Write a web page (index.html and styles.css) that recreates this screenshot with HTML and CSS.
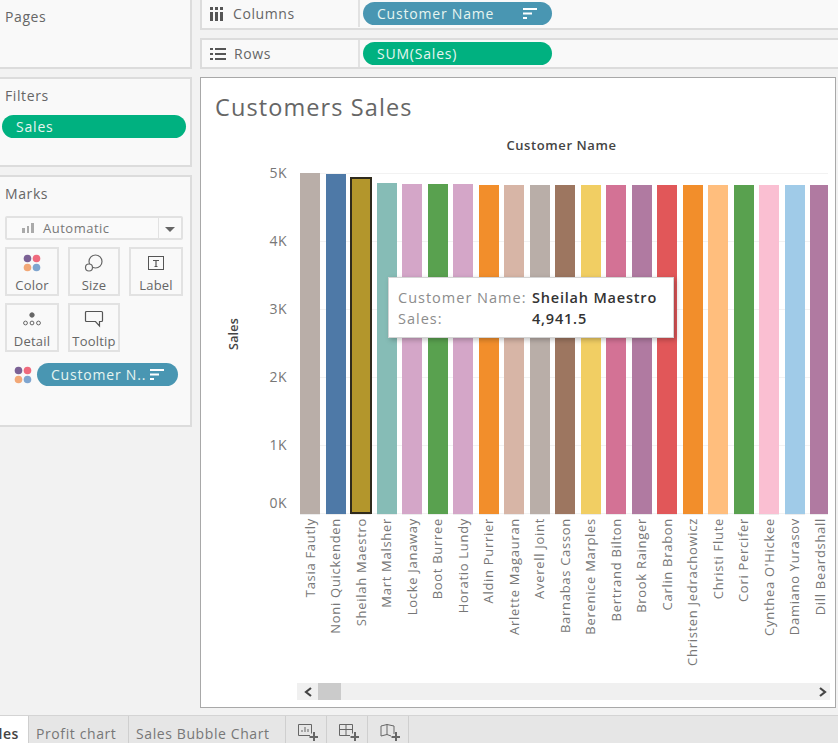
FILE: index.html
```html
<!DOCTYPE html>
<html lang="en">
<head>
    <meta charset="UTF-8">
    <title>Customers Sales</title>
    <link rel="stylesheet" href="styles.css">
</head>
<body>
<div id="wrap">
    <aside class="side">
        <section class="card pages"><h3>Pages</h3></section>
        <section class="card filters">
            <h3>Filters</h3>
            <div class="pill green filter-pill">Sales</div>
        </section>
        <section class="card marks">
            <h3>Marks</h3>
            <div class="select">
                <svg class="select-icon" width="14" height="12" viewBox="0 0 14 12"><path d="M1 6h3v5H1zM6 4h2v7H6zM10 1h3v10h-3z" fill="#aaa"/></svg>
                <span class="select-text">Automatic</span>
                <span class="select-arrow"></span>
            </div>
            <div class="mark-grid">
                <div class="mark-btn">
                    <svg width="18" height="18" viewBox="0 0 18 18"><circle cx="4.5" cy="4.5" r="3.8" fill="#7b6195"/><circle cx="13.5" cy="4.5" r="3.8" fill="#ef6a7d"/><circle cx="4.5" cy="13.5" r="3.8" fill="#f2a877"/><circle cx="13.5" cy="13.5" r="3.8" fill="#7fa5cf"/></svg>
                    <span>Color</span>
                </div>
                <div class="mark-btn">
                    <svg width="20" height="18" viewBox="0 0 20 18" fill="none" stroke="#666" stroke-width="1.2"><circle cx="11.5" cy="7.5" r="6.5"/><circle cx="5" cy="13.5" r="3.5" fill="#f9f9f9"/></svg>
                    <span>Size</span>
                </div>
                <div class="mark-btn">
                    <svg width="18" height="18" viewBox="0 0 18 18" fill="none" stroke="#555"><rect x="1.5" y="2.5" width="15" height="13"/><path d="M6 6.5h6M9 6.5v6M7.5 12.5h3" stroke-width="1.2"/></svg>
                    <span>Label</span>
                </div>
                <div class="mark-btn">
                    <svg width="20" height="18" viewBox="0 0 20 18" fill="none" stroke="#666"><circle cx="10" cy="5" r="2.2" fill="#666"/><circle cx="3.5" cy="13" r="1.9"/><circle cx="10" cy="13" r="1.9"/><circle cx="16.5" cy="13" r="1.9"/></svg>
                    <span>Detail</span>
                </div>
                <div class="mark-btn">
                    <svg width="20" height="18" viewBox="0 0 20 18" fill="none" stroke="#555" stroke-width="1.2"><path d="M2.5 1.5h15a1 1 0 0 1 1 1v8a1 1 0 0 1-1 1h-2v4.5l-4-4.5h-9a1 1 0 0 1-1-1v-8a1 1 0 0 1 1-1z"/></svg>
                    <span>Tooltip</span>
                </div>
            </div>
            <div class="mark-field">
                <svg width="18" height="18" viewBox="0 0 18 18"><circle cx="4.5" cy="4.5" r="3.8" fill="#7b6195"/><circle cx="13.5" cy="4.5" r="3.8" fill="#ef6a7d"/><circle cx="4.5" cy="13.5" r="3.8" fill="#f2a877"/><circle cx="13.5" cy="13.5" r="3.8" fill="#7fa5cf"/></svg>
                <div class="pill blue field-pill">
                    <span>Customer N..</span>
                    <svg class="sort" width="14" height="11" viewBox="0 0 14 11"><path d="M0 0h14v2H0zM0 4.500h9v2H0zM0 9h4v2H0z" fill="#fff"/></svg>
                </div>
            </div>
        </section>
    </aside>

    <main class="main">
        <div class="shelf shelf-columns">
            <div class="shelf-label">
                <svg width="13" height="14" viewBox="0 0 13 14"><path d="M0 0h3v3H0zM0 5h3v9H0zM5 0h3v3H5zM5 5h3v9H5zM10 0h3v3h-3zM10 5h3v9h-3z" fill="#555"/></svg>
                <span>Columns</span>
            </div>
            <div class="shelf-body">
                <div class="pill blue shelf-pill">
                    <span>Customer Name</span>
                    <svg class="sort" width="14" height="11" viewBox="0 0 14 11"><path d="M0 0h14v2H0zM0 4.500h9v2H0zM0 9h4v2H0z" fill="#fff"/></svg>
                </div>
            </div>
        </div>
        <div class="shelf shelf-rows">
            <div class="shelf-label shelf-label-rows">
                <svg width="16" height="12" viewBox="0 0 16 12"><path d="M0 0h3v2H0zM5 0h11v2H5zM0 5h3v2H0zM5 5h11v2H5zM0 10h3v2H0zM5 10h11v2H5z" fill="#555"/></svg>
                <span>Rows</span>
            </div>
            <div class="shelf-body">
                <div class="pill green shelf-pill"><span>SUM(Sales)</span></div>
            </div>
        </div>

        <section class="view">
            <h1 class="title">Customers Sales</h1>
            <div class="axis-title">Customer Name</div>
            <div class="chart">
                <div class="y-title"><span>Sales</span></div>
                <div class="y-axis">
                    <div class="tick">5K</div>
                    <div class="tick">4K</div>
                    <div class="tick">3K</div>
                    <div class="tick">2K</div>
                    <div class="tick">1K</div>
                    <div class="tick tick-zero">0K</div>
                </div>
                <div class="plot">
                    <div class="col"><div class="slot"><div class="bar" style="height:341px;background:#b9aea8"></div></div><div class="name">Tasia Fautly</div></div>
                    <div class="col"><div class="slot"><div class="bar" style="height:340px;background:#4e79a7"></div></div><div class="name">Noni Quickenden</div></div>
                    <div class="col"><div class="slot"><div class="bar bar-on" style="height:337px;background:#b3962c"></div></div><div class="name">Sheilah Maestro</div></div>
                    <div class="col"><div class="slot"><div class="bar" style="height:331px;background:#86bcb6"></div></div><div class="name">Mart Malsher</div></div>
                    <div class="col"><div class="slot"><div class="bar" style="height:330px;background:#d4a6c8"></div></div><div class="name">Locke Janaway</div></div>
                    <div class="col"><div class="slot"><div class="bar" style="height:330px;background:#59a14f"></div></div><div class="name">Boot Burree</div></div>
                    <div class="col"><div class="slot"><div class="bar" style="height:330px;background:#d4a6c8"></div></div><div class="name">Horatio Lundy</div></div>
                    <div class="col"><div class="slot"><div class="bar" style="height:329px;background:#f28e2b"></div></div><div class="name">Aldin Purrier</div></div>
                    <div class="col"><div class="slot"><div class="bar" style="height:329px;background:#d7b5a6"></div></div><div class="name">Arlette Magauran</div></div>
                    <div class="col"><div class="slot"><div class="bar" style="height:329px;background:#b9aea8"></div></div><div class="name">Averell Joint</div></div>
                    <div class="col"><div class="slot"><div class="bar" style="height:329px;background:#9d7660"></div></div><div class="name">Barnabas Casson</div></div>
                    <div class="col"><div class="slot"><div class="bar" style="height:329px;background:#f1ce63"></div></div><div class="name">Berenice Marples</div></div>
                    <div class="col"><div class="slot"><div class="bar" style="height:329px;background:#d37295"></div></div><div class="name">Bertrand Bilton</div></div>
                    <div class="col"><div class="slot"><div class="bar" style="height:329px;background:#b07aa1"></div></div><div class="name">Brook Rainger</div></div>
                    <div class="col"><div class="slot"><div class="bar" style="height:329px;background:#e15759"></div></div><div class="name">Carlin Brabon</div></div>
                    <div class="col"><div class="slot"><div class="bar" style="height:329px;background:#f28e2b"></div></div><div class="name">Christen Jedrachowicz</div></div>
                    <div class="col"><div class="slot"><div class="bar" style="height:329px;background:#ffbe7d"></div></div><div class="name">Christi Flute</div></div>
                    <div class="col"><div class="slot"><div class="bar" style="height:329px;background:#59a14f"></div></div><div class="name">Cori Percifer</div></div>
                    <div class="col"><div class="slot"><div class="bar" style="height:329px;background:#fabfd2"></div></div><div class="name">Cynthea O'Hickee</div></div>
                    <div class="col"><div class="slot"><div class="bar" style="height:329px;background:#a0cbe8"></div></div><div class="name">Damiano Yurasov</div></div>
                    <div class="col"><div class="slot"><div class="bar" style="height:329px;background:#b07aa1"></div></div><div class="name">Dill Beardshall</div></div>
                </div>
            </div>
            <div class="scroll">
                <svg width="10" height="10" viewBox="0 0 10 10"><path d="M8 1 3 5l5 4" fill="none" stroke="#444" stroke-width="2.200"/></svg>
                <div class="thumb"></div>
                <svg class="scroll-next" width="10" height="10" viewBox="0 0 10 10"><path d="M2 1l5 4-5 4" fill="none" stroke="#444" stroke-width="2.200"/></svg>
            </div>
            <div class="tip">
                <div class="tip-key">Customer Name:</div><div class="tip-val">Sheilah Maestro</div>
                <div class="tip-key">Sales:</div><div class="tip-val">4,941.5</div>
            </div>
        </section>
    </main>

    <nav class="tabs">
        <a class="tab active">Sales</a>
        <a class="tab tab-profit">Profit chart</a>
        <a class="tab tab-bubble">Sales Bubble Chart</a>
        <a class="tab tab-icon">
            <svg width="21" height="18" viewBox="0 0 21 18" fill="none" stroke="#666"><path d="M13 12.500H1.500v-11h13v9"/><path d="M5 9V7M8 9V4M11 9V6"/><path d="M17 9v9M12.500 14h8.500" stroke-width="2"/></svg>
        </a>
        <a class="tab tab-icon">
            <svg width="21" height="18" viewBox="0 0 21 18" fill="none" stroke="#666"><path d="M12 12.500H1.500v-11h13v9M1.500 6.500h13M8 1.500v11"/><path d="M17 9v9M12.500 14h8.500" stroke-width="2"/></svg>
        </a>
        <a class="tab tab-icon">
            <svg width="21" height="18" viewBox="0 0 21 18" fill="none" stroke="#666"><path d="M12 13 8 11.500l-6 1.500V3l6-1.500 7 1.500v8M8 1.500v10"/><path d="M17 9v9M12.500 14h8.500" stroke-width="2"/></svg>
        </a>
    </nav>
</div>
</body>
</html>
```

FILE: styles.css
```css
html, body {
    margin: 0;
    height: 743px;
    overflow: hidden;
    background: #f2f2f2;
    font-family: "Open Sans", "Liberation Sans", sans-serif;
    color: #666;
}
#wrap {
    display: grid;
    grid-template-columns: 192px 1fr;
    grid-template-rows: 708px 28px;
    column-gap: 8px;
    row-gap: 7px;
    width: 838px;
    height: 743px;
    overflow: hidden;
}
h1, h3 {
    margin: 0;
    font-weight: normal;
}

/* left column */
.side {
    display: flex;
    flex-direction: column;
    gap: 8px;
}
.card {
    box-sizing: border-box;
    background: #f9f9f9;
    border: 2px solid #dcdcdc;
    border-left: 0;
    padding: 0 5px;
}
.card h3 {
    font-size: 14px;
    letter-spacing: .6px;
    color: #666;
}
.pages {
    height: 69px;
    border-top: 0;
    padding-top: 7px;
}
.filters {
    height: 90px;
    padding: 7px 0 0 2px;
}
.filters h3 {
    padding-left: 3px;
}
.marks {
    height: 252px;
    padding-top: 7px;
}
.pill {
    display: flex;
    align-items: center;
    box-sizing: border-box;
    height: 23px;
    border-radius: 12px;
    color: #e6f5f0;
    font-size: 14px;
    letter-spacing: .8px;
}
.green { background: #00b180; }
.blue { background: #4996b2; }
.filter-pill {
    width: 184px;
    margin-top: 10px;
    padding-left: 14px;
}

.select {
    display: flex;
    align-items: center;
    box-sizing: border-box;
    width: 178px;
    height: 24px;
    margin-top: 13px;
    border: 2px solid #e2e2e2;
    border-radius: 2px;
    background: #fafafa;
}
.select-icon {
    margin-left: 14px;
}
.select-text {
    flex: 1;
    margin-left: 8px;
    font-size: 13px;
    letter-spacing: .5px;
    color: #777;
}
.select-arrow {
    position: relative;
    width: 22px;
    height: 100%;
    border-left: 1px solid #e2e2e2;
}
.select-arrow::after {
    content: "";
    position: absolute;
    left: 6px;
    top: 9px;
    border: 5px solid transparent;
    border-top: 5px solid #666;
    border-bottom: 0;
}
.mark-grid {
    display: grid;
    grid-template-columns: 54px 52px 54px;
    grid-auto-rows: 49px;
    column-gap: 9px;
    row-gap: 7px;
    margin-top: 7px;
}
.mark-btn {
    display: flex;
    flex-direction: column;
    align-items: center;
    justify-content: space-between;
    box-sizing: border-box;
    border: 2px solid #e2e2e2;
    padding: 5px 0 0;
    font-size: 13px;
    line-height: 18px;
    letter-spacing: .2px;
    color: #666;
}
.mark-field {
    display: flex;
    align-items: center;
    gap: 5px;
    margin-top: 11px;
    padding-left: 9px;
}
.field-pill {
    width: 141px;
    padding: 0 14px;
    justify-content: space-between;
}

/* shelves */
.shelf {
    display: flex;
    box-sizing: border-box;
    background: #f9f9f9;
    border: 2px solid #dcdcdc;
    border-right: 0;
}
.shelf-columns {
    height: 30px;
    border-top: 0;
    margin-bottom: 8px;
    padding-bottom: 1px;
}
.shelf-rows {
    height: 31px;
    margin-bottom: 8px;
}
.shelf-label {
    display: flex;
    align-items: center;
    gap: 10px;
    box-sizing: border-box;
    width: 158px;
    padding-left: 8px;
    border-right: 2px solid #e2e2e2;
    font-size: 14px;
    letter-spacing: .6px;
    color: #666;
}
.shelf-label-rows {
    gap: 8px;
}
.shelf-body {
    display: flex;
    align-items: center;
    padding-left: 3px;
}
.shelf-pill {
    width: 189px;
    padding: 0 15px 0 14px;
    justify-content: space-between;
}

/* chart */
.view {
    position: relative;
    box-sizing: border-box;
    width: 636px;
    height: 631px;
    background: #fff;
    border: 1px solid #a8a8a8;
}
.title {
    margin: 14px 0 0 14px;
    font-size: 23.500px;
    line-height: 30px;
    letter-spacing: 1.100px;
    color: #666;
}
.axis-title {
    margin: 15px 0 0 238px;
    width: 245px;
    text-align: center;
    font-size: 13px;
    line-height: 16px;
    font-weight: 600;
    letter-spacing: .6px;
    color: #444;
}
.chart {
    display: flex;
    height: 505px;
    margin-top: 16px;
}
.y-title {
    display: flex;
    align-items: center;
    justify-content: center;
    width: 64px;
    height: 329px;
}
.y-title span {
    writing-mode: vertical-rl;
    transform: rotate(180deg);
    font-size: 12.500px;
    font-weight: 600;
    letter-spacing: .2px;
    color: #444;
}
.y-axis {
    width: 22px;
    font-size: 14px;
    line-height: 18px;
    letter-spacing: .5px;
    color: #777;
    margin-top: -5px;
}
.tick {
    height: 68px;
    text-align: right;
}
.tick-zero {
    margin-top: -10px;
}
.plot {
    display: grid;
    grid-template-columns: repeat(21, 25.5px);
    width: 528px;
    height: 100%;
    margin-left: 13px;
    overflow: hidden;
    background: repeating-linear-gradient(to bottom, #f2f2f2 0, #f2f2f2 1px, transparent 1px, transparent 68px) 0 4px / 100% 341px no-repeat;
}
.col {
    display: flex;
    flex-direction: column;
    align-items: center;
    width: 20px;
}
.slot {
    display: flex;
    align-items: flex-end;
    width: 20px;
    height: 345px;
    flex: none;
    border-bottom: 1px solid #ececec;
}
.bar {
    width: 20px;
    box-sizing: border-box;
}
.bar-on {
    width: 22px;
    flex: none;
    margin: 0 -1px;
    border: 2px solid #2f2a1c;
}
.name {
    margin: 3px 1px 0 0;
    writing-mode: vertical-rl;
    transform: rotate(180deg);
    white-space: nowrap;
    font-size: 13px;
    line-height: 16px;
    letter-spacing: .7px;
    color: #777;
}
.scroll {
    position: absolute;
    left: 96px;
    top: 605px;
    display: flex;
    align-items: center;
    width: 533px;
    height: 17px;
    background: #f0f0f0;
}
.scroll svg {
    margin-left: 6px;
}
.thumb {
    width: 23px;
    height: 17px;
    margin-left: 5px;
    background: #cbcbcb;
}
.scroll .scroll-next {
    margin-left: auto;
    margin-right: 2px;
}
.tip {
    position: absolute;
    left: 187px;
    top: 199px;
    display: grid;
    grid-template-columns: 134px auto;
    box-sizing: border-box;
    width: 286px;
    height: 61px;
    padding: 9px 9px;
    background: #fff;
    border: 1px solid #d4d4d4;
    box-shadow: 2px 2px 5px rgba(0, 0, 0, .25);
    font-size: 14.500px;
    line-height: 21px;
    letter-spacing: 1px;
}
.tip-key { color: #8c8c8c; }
.tip-val { color: #333; font-weight: 600; letter-spacing: .8px; }

/* bottom tabs */
.tabs {
    grid-column: 1 / 3;
    display: flex;
    height: 28px;
    background: #e6e6e6;
    border-top: 1px solid #d4d4d4;
}
.tab {
    display: flex;
    align-items: center;
    box-sizing: border-box;
    height: 28px;
    padding-top: 6px;
    border-right: 1px solid #cfcfcf;
    font-size: 14px;
    letter-spacing: .6px;
    color: #777;
}
.active {
    width: 29px;
    justify-content: flex-end;
    padding-right: 9px;
    background: #fff;
    color: #444;
    font-weight: 600;
    overflow: hidden;
}
.tab-profit { width: 100px; padding-left: 7px; }
.tab-bubble { width: 157px; padding-left: 7px; }
.tab-icon { width: 41px; padding-left: 11px; padding-top: 4px; }
```
